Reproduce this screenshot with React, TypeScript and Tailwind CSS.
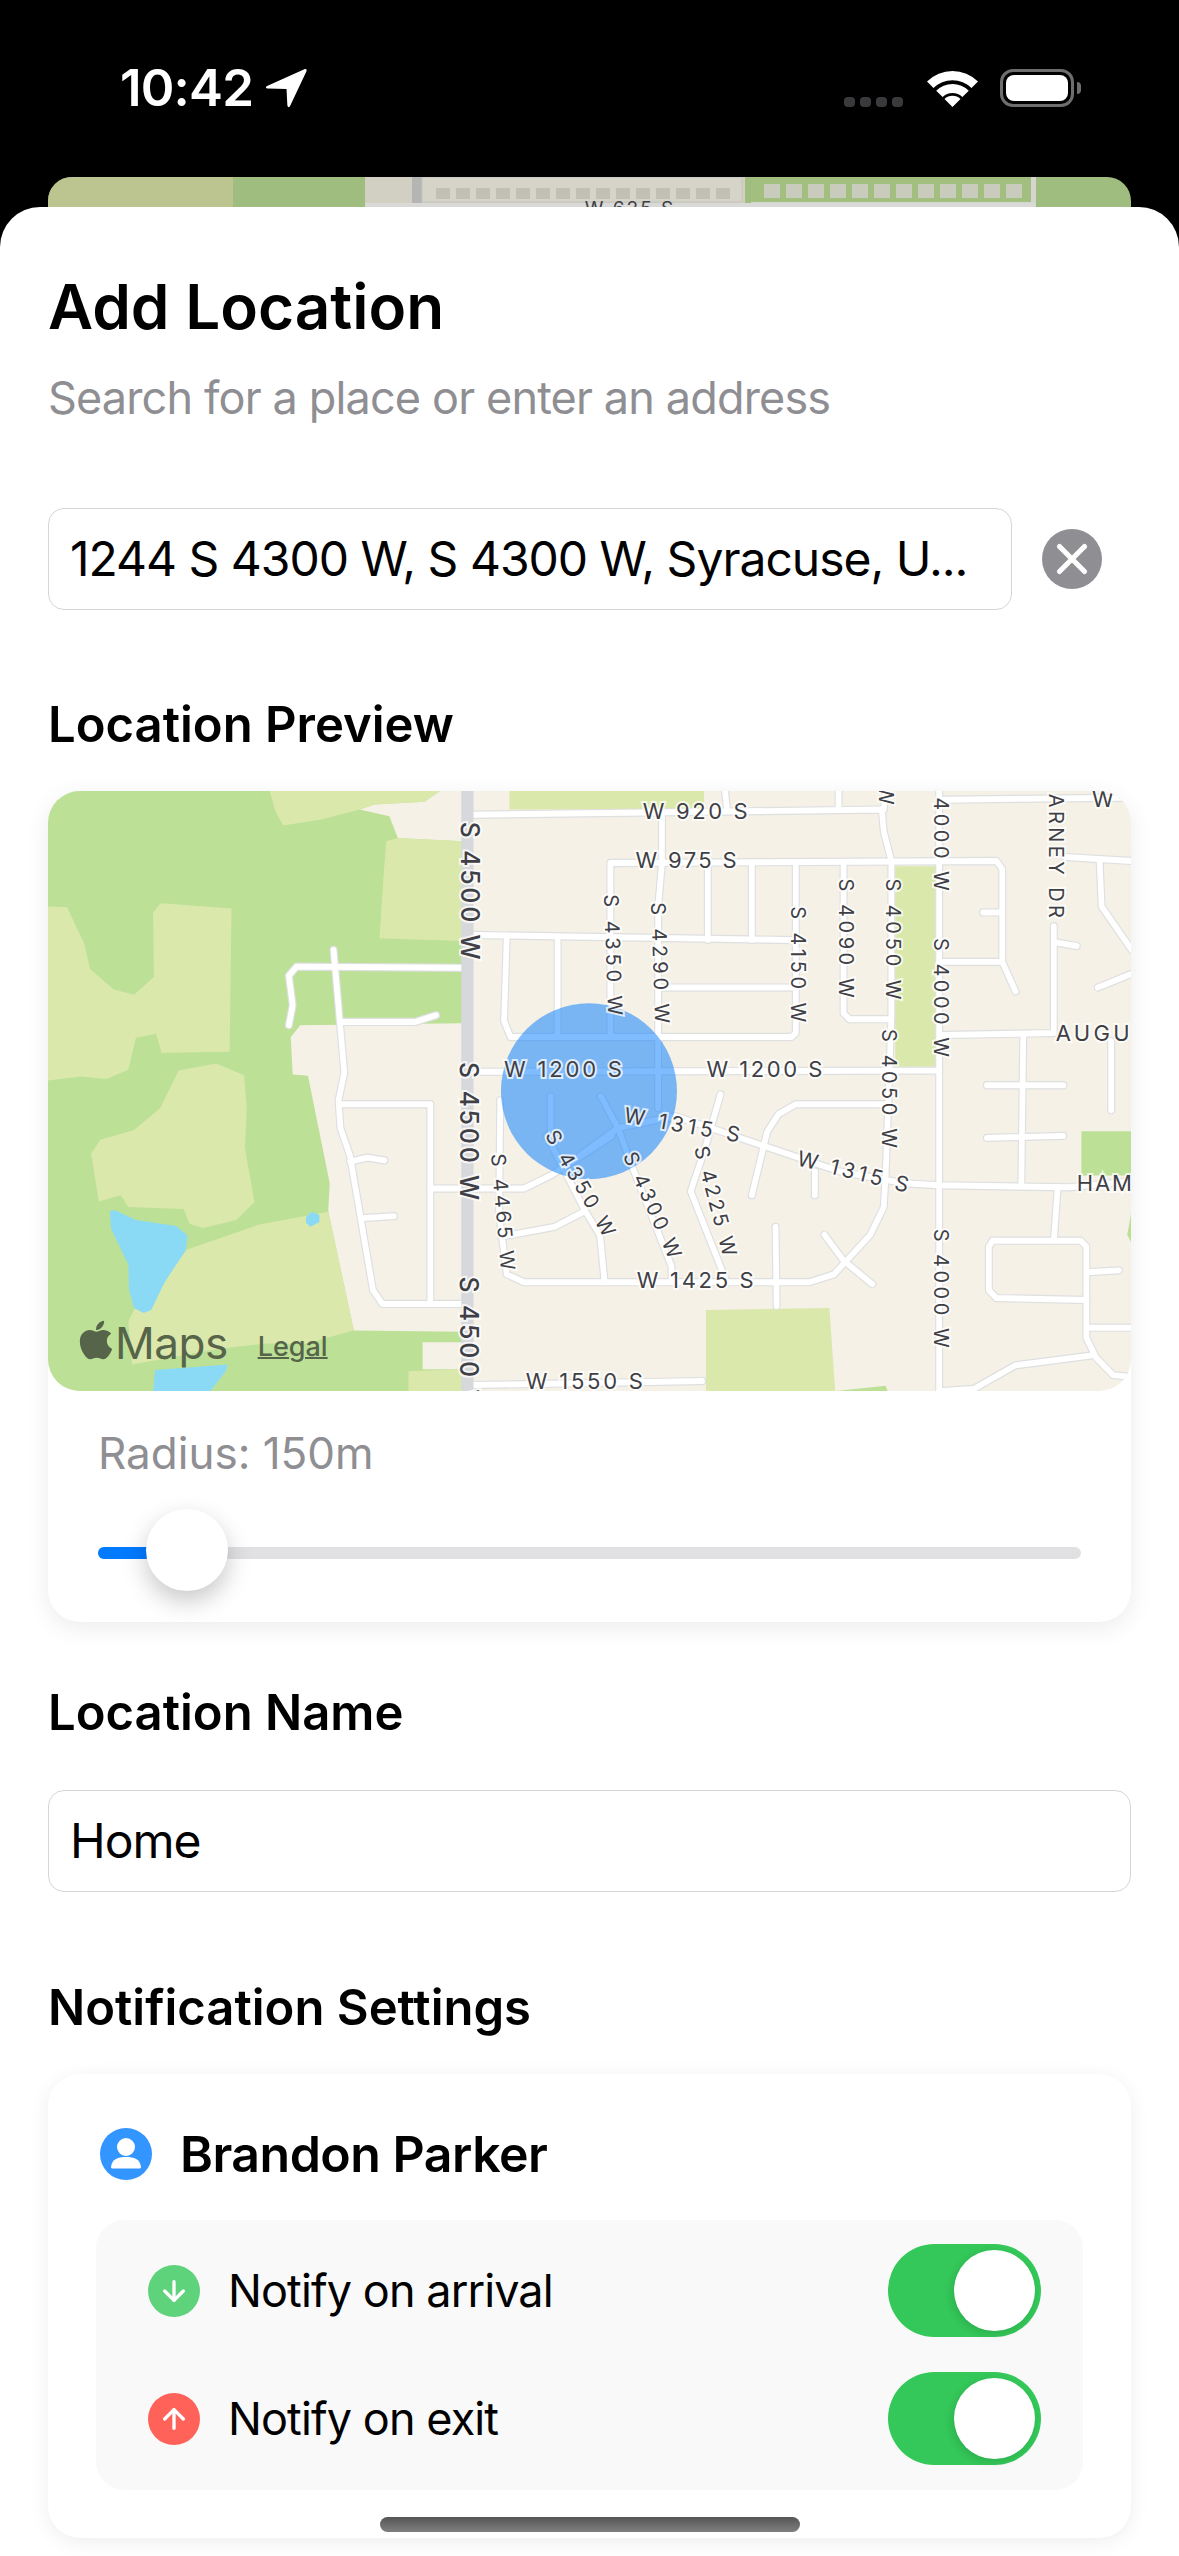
import React from "react";
import { ArrowDown, ArrowUp, X } from "lucide-react";
import { FaApple } from "react-icons/fa";

const sx = (z: number) => (z - 125) * 0.3823;
const sy = (z: number) => (z - 28) * 0.3955;
const R = 1516; // right hand crop starts here in map units

const PARK_DARK = "#bde097";
const PARK_LIGHT = "#dbe8ac";
const LAND = "#f5f1e6";
const WATER = "#8adaf5";

const LIGHT_PATCHES = [
  "705,28 1150,28 1110,55 980,62 940,75 840,100 740,115 720,80",
  "1010,155 1040,147 1208,155 1208,407 992,400 1003,240",
  "125,320 175,322 220,415 235,478 297,530 350,543 402,498 400,335 420,312 605,325 600,687 422,690 408,642 355,652 335,733 278,756 212,750 125,760",
  "467,735 565,717 638,747 645,830 640,930 665,1068 617,1113 530,1133 495,1122 480,1085 335,1080 315,1050 258,1066 238,945 262,910 350,885 418,830",
  "487,1188 675,1125 858,1092 925,1392 800,1425 700,1425 645,1430 560,1440 345,1478 335,1370 350,1340 430,1260",
  "1068,1495 1208,1490 1208,1545 1068,1545",
  `1332,28 ${R + 325},28 ${R + 325},75 1332,75`,
  `${R + 825},218 ${R + 930},218 ${R + 930},725 ${R + 825},725`,
  `${R + 330},1340 ${R + 653},1335 ${R + 668},1545 ${R + 330},1545`,
];

const ROADS = [
  // left estate
  "M1210 475 L775 472 L755 495 L765 570 L755 620",
  "M872 430 L900 740 L885 810 L890 880 L915 950 L975 1290 L1000 1325 L1205 1325",
  "M895 612 L1085 612 L1140 595",
  "M890 820 L1125 820 L1125 1325",
  "M915 965 L960 955 L1005 962",
  "M945 1108 L1030 1103",
  "M1125 1033 L1370 1033 L1440 1000 L1600 900",
  "M1235 738 L2456 735",
  // grid
  "M1235 88 L2306 75 L2311 130 L2331 205 L2331 600 L2316 1000 L2311 1080 L2276 1150 L2181 1250 L2116 1270 L1370 1270 L1325 1250 L1305 1100 L1308 810",
  "M1896 28 L1901 75",
  "M2193 28 L2193 75",
  "M2316 28 L2311 75",
  "M1596 650 L1596 210 L2606 205 L2621 225 L2621 460 L2656 535",
  "M1731 88 L1731 210 L1721 320 L1721 830",
  "M1851 210 L1851 405",
  "M1966 210 L1966 405",
  "M2081 210 L2081 640 L2070 650 L1335 650 L1318 610 L1325 395",
  "M2206 210 L2206 590 L2221 605 L2331 605",
  "M1240 392 L2081 405",
  "M1458 395 L1458 650",
  "M1726 525 L2081 525",
  // east
  "M2456 28 L2456 1545",
  "M2466 645 L2756 640 L2756 370",
  "M2456 460 L2621 460",
  "M2571 335 L2616 335",
  "M2756 410 L2816 420",
  "M2676 645 L2671 1025",
  "M2581 772 L2781 772",
  "M2581 905 L2781 900",
  "M2906 660 L2906 835",
  "M2786 195 L2960 205",
  "M2876 210 L2881 320 L2960 430",
  "M2871 525 L2960 490",
  "M2466 50 L2936 45",
  // W 1315
  "M1616 880 L1766 850 L1996 925 L2196 990 L2366 1020 L2456 1025 L2796 1030 L2960 1015",
  "M2316 820 L2081 820 L2036 845 L2006 890 L1966 1050",
  "M1884 795 L1841 940 L1806 1040 L1900 1270",
  "M2131 990 L2131 1050",
  "M2028 1130 L2031 1330",
  "M2156 1150 L2206 1215 L2281 1275",
  // south east block
  "M2766 1030 L2756 1165",
  "M2596 1165 L2826 1165 L2841 1180 L2841 1410 L2866 1460 L2911 1505 L2960 1510",
  "M2596 1165 L2586 1180 L2586 1290 L2606 1310 L2841 1315",
  "M2841 1245 L2926 1240",
  "M2841 1385 L2960 1385",
  "M2856 1455 L2656 1480 L2546 1540 L2466 1545",
  // around the circle
  "M1440 800 L1440 900",
  "M1571 800 L1616 880 L1656 985 L1756 1230 L1756 1270",
  "M1516 950 L1616 880",
  "M1430 900 L1530 1090 L1568 1150 L1571 1170 L1581 1270",
  "M1310 1155 L1450 1130 L1530 1090",
  "M1235 1530 L1836 1520",
];

type LabelDef = { t: string; x: number; y: number; rot?: number; len?: number; size?: number; start?: boolean; bold?: boolean };

const LABELS: LabelDef[] = [
  { t: "S 4500 W", x: 1228, y: 280, rot: 90, len: 138, size: 25, bold: true },
  { t: "S 4500 W", x: 1226, y: 888, rot: 90, len: 138, size: 25, bold: true },
  { t: "S 4500 W", x: 1226, y: 1430, rot: 90, len: 138, size: 25, bold: true },
  { t: "W 1200 S", x: 1472, y: 730, len: 118, size: 22 },
  { t: "W 1200 S", x: R + 483, y: 730, len: 116, size: 22 },
  { t: "W 920 S", x: R + 302, y: 78, len: 105, size: 22 },
  { t: "W 975 S", x: R + 278, y: 203, len: 101, size: 22 },
  { t: "W 1425 S", x: R + 302, y: 1265, len: 117, size: 22 },
  { t: "W 1550 S", x: 1528, y: 1520, len: 117, size: 22 },
  { t: "AUGU", x: R + 1245, y: 640, len: 74, size: 22, start: true },
  { t: "HAM", x: R + 1300, y: 1018, len: 55, size: 22, start: true },
  { t: "W", x: R + 1368, y: 47, size: 22 },
  { t: "S 4350 W", x: R + 87, y: 442, rot: 88, len: 121, size: 20 },
  { t: "S 4290 W", x: R + 210, y: 462, rot: 88, len: 121, size: 20 },
  { t: "S 4150 W", x: R + 570, y: 466, rot: 90, len: 116, size: 20 },
  { t: "S 4090 W", x: R + 697, y: 400, rot: 90, len: 119, size: 20 },
  { t: "S 4050 W", x: R + 820, y: 402, rot: 90, len: 121, size: 20 },
  { t: "S 4050 W", x: R + 808, y: 780, rot: 90, len: 119, size: 20 },
  { t: "S 4000 W", x: R + 945, y: 550, rot: 90, len: 119, size: 20 },
  { t: "S 4000 W", x: R + 945, y: 130, rot: 90, len: 119, size: 20 },
  { t: "S 4000 W", x: R + 945, y: 1285, rot: 90, len: 119, size: 20 },
  { t: "ARNEY DR", x: R + 1245, y: 192, rot: 90, len: 124, size: 20 },
  { t: "W", x: R + 800, y: 38, rot: 90, size: 20 },
  { t: "W 1315 S", x: R + 268, y: 872, rot: 10, len: 117, size: 21 },
  { t: "W 1315 S", x: R + 715, y: 990, rot: 14, len: 114, size: 21 },
  { t: "S 4300 W", x: R + 190, y: 1075, rot: 66, len: 114, size: 20 },
  { t: "S 4225 W", x: R + 355, y: 1065, rot: 75, len: 113, size: 20 },
  { t: "S 4350 W", x: 1518, y: 1020, rot: 60, len: 119, size: 20 },
  { t: "S 4465 W", x: 1315, y: 1092, rot: 85, len: 117, size: 20 },
];

function MapPreview() {
  return (
    <svg viewBox="0 0 1083 600" className="block w-full h-full" fontFamily="Inter, sans-serif">
      <rect width="1083" height="600" fill={LAND} />
      <g transform="scale(0.3823,0.3955) translate(-125,-28)">
        <polygon points="125,28 1208,28 1208,1545 125,1545" fill={PARK_DARK} />
        <polygon points="1150,28 1208,28 1208,155 1040,147 1018,92 940,75 980,62 1110,55" fill={LAND} />
        <polygon points="760,650 785,620 1208,615 1208,1395 925,1392 858,1090 862,1020 805,748 765,745" fill={LAND} />
        <polygon points="1105,1422 1208,1422 1208,1490 1105,1490" fill={LAND} />
        {LIGHT_PATCHES.map((p, i) => <polygon key={i} points={p} fill={PARK_LIGHT} />)}
        <polygon points={`${R + 670},1545 ${R + 800},1532 ${R + 805},1545`} fill={PARK_DARK} />
        <polygon points={`${R + 1312},888 ${R + 1445},888 ${R + 1445},1000 ${R + 1312},1000`} fill={PARK_DARK} />
        <polygon points={`${R + 1445},1080 ${R + 1432},1150 ${R + 1445},1175`} fill={PARK_DARK} />
        <polygon points="287,1090 300,1088 355,1113 460,1128 490,1152 485,1190 430,1270 395,1340 375,1348 350,1335 337,1290 335,1225 290,1135" fill={WATER} />
        <polygon points="800,1105 815,1092 835,1100 835,1118 812,1130 800,1120" fill={WATER} />
        <polygon points="405,1492 595,1478 590,1495 550,1545 400,1545" fill={WATER} />
        <g fill="none" strokeLinecap="round" strokeLinejoin="round">
          {ROADS.map((d, i) => <path key={i} d={d} stroke="#dedfe0" strokeWidth="21" />)}
          {ROADS.map((d, i) => <path key={i} d={d} stroke="#ffffff" strokeWidth="15" />)}
        </g>
        <rect x="1206" y="28" width="32" height="1517" fill="#d7d8dc" />
      </g>
      <circle cx={sx(1540)} cy={sy(787)} r="88" fill="#007aff" fillOpacity="0.5" />
      {LABELS.map((l, i) => (
        <text
          key={i}
          x={sx(l.x)}
          y={sy(l.y)}
          transform={l.rot ? `rotate(${l.rot} ${sx(l.x)} ${sy(l.y)})` : undefined}
          textAnchor={l.start ? "start" : "middle"}
          dominantBaseline="central"
          fontSize={l.size}
          fontWeight={l.bold ? 500 : 400}
          textLength={l.len}
          lengthAdjust="spacing"
          fill="#3f4045"
          stroke="#ffffff"
          strokeOpacity="0.75"
          strokeWidth="4"
          paintOrder="stroke"
        >
          {l.t}
        </text>
      ))}
    </svg>
  );
}

function BehindStrip() {
  const rowA = [0, 1, 2, 3, 4, 5, 6, 7, 8, 9, 10, 11, 12, 13, 14];
  const rowB = [0, 1, 2, 3, 4, 5, 6, 7, 8, 9, 10, 11];
  return (
    <svg viewBox="0 0 1083 30" className="block w-full h-full" fontFamily="Inter, sans-serif">
      <rect width="1083" height="30" fill="#a0bd80" />
      <rect width="185" height="30" fill="#bcc48f" />
      <rect x="317" width="380" height="30" fill="#d2d0c3" />
      <rect x="364" width="10" height="30" fill="#b5b6b4" />
      <rect x="374" width="320" height="25" fill="#d6d4c8" stroke="#c3c4c0" />
      {rowA.map(i => <rect key={i} x={388 + i * 20} y="11" width="14" height="11" fill="#c2c0b4" />)}
      <rect x="703" width="285" height="30" fill="#d5d5d2" />
      <rect x="703" width="280" height="25" fill="#a2bf80" />
      {rowB.map(i => <rect key={i} x={716 + i * 22} y="7" width="16" height="14" fill="#c9ccbc" />)}
      <rect x="317" y="26" width="670" height="4" fill="#d9d9d7" />
      <text x="582" y="38" textAnchor="middle" fontSize="19" letterSpacing="2" fill="#3f4045">W 625 S</text>
    </svg>
  );
}

function StatusBar() {
  return (
    <div className="h-[177px] flex items-start justify-between pt-[68px] pl-[120px] pr-[98px] text-white">
      <div className="flex items-center gap-[12px]">
        <span className="text-[51px] leading-[40px] font-semibold tracking-[-0.8px] font-['Inter',sans-serif]">10:42</span>
        <svg width="42" height="40" viewBox="0 0 40 38" className="fill-white">
          <path d="M38 1 C39.500 .5 40 1.500 39.500 3 L24 36 C23 38 21.500 37.500 21.300 35.500 L20.500 20 L3 19.500 C.5 19.400 .2 17.800 2.500 16.800 Z" />
        </svg>
      </div>
      <div className="flex items-center h-[40px]">
        <div className="flex gap-[5px] mt-[28px] mr-[24px]">
          <span className="w-[11px] h-[10px] rounded-[4px] bg-[#3a3a3c]" />
          <span className="w-[11px] h-[10px] rounded-[4px] bg-[#3a3a3c]" />
          <span className="w-[11px] h-[10px] rounded-[4px] bg-[#3a3a3c]" />
          <span className="w-[11px] h-[10px] rounded-[4px] bg-[#3a3a3c]" />
        </div>
        <svg width="51" height="38" viewBox="-.5 0 51 38" className="mr-[22px] fill-white">
          <path d="M-.5 12.500 A36 36 0 0 1 50.500 12.500 L44 19 A27 27 0 0 0 6 19 Z" />
          <path d="M8.700 21.700 A23 23 0 0 1 41.300 21.700 L34.900 28.100 A14 14 0 0 0 15.100 28.100 Z" />
          <path d="M17 30 A11.300 11.300 0 0 1 33 30 L25 38 Z" />
        </svg>
        <div className="w-[74px] h-[38px] rounded-[13px] border-[3px] border-[#6e6e70] p-[3px]">
          <div className="w-full h-full rounded-[8px] bg-white" />
        </div>
        <div className="w-[4px] h-[12px] rounded-r-full bg-[#6e6e70] ml-[3px]" />
      </div>
    </div>
  );
}

function SectionTitle({ children, className }: { children: React.ReactNode; className: string }) {
  return <h2 className={`h-[56px] text-[49px] leading-[56px] font-semibold text-black ${className}`}>{children}</h2>;
}

function UserIcon() {
  return (
    <svg width="52" height="52" viewBox="0 0 52 52">
      <circle cx="26" cy="26" r="26" fill="#3395ff" />
      <circle cx="26" cy="19" r="9" fill="#fff" />
      <path d="M11 39 C12 31 18 29 26 29 C34 29 40 31 41 39 C41 40 40 40.500 39 40.500 L13 40.500 C12 40.500 11 40 11 39 Z" fill="#fff" />
    </svg>
  );
}

function Toggle() {
  return (
    <div className="w-[153px] h-[93px] rounded-full bg-[#34c759] flex justify-end items-center pr-[6px]">
      <div className="w-[81px] h-[81px] rounded-full bg-white shadow-[-2px_3px_8px_rgba(0,0,0,0.12)]" />
    </div>
  );
}

function NotifyRow({ label, tint, icon }: { label: string; tint: string; icon: React.ReactNode }) {
  return (
    <div className="flex items-center h-[93px]">
      <div className={`w-[52px] h-[52px] rounded-full flex items-center justify-center text-white ${tint}`}>{icon}</div>
      <span className="ml-[28px] text-[45px] tracking-[-0.9px] text-black flex-1">{label}</span>
      <Toggle />
    </div>
  );
}

export default function App() {
  return (
    <div className="relative w-[1179px] h-[2556px] overflow-hidden bg-black flex flex-col font-['Inter',sans-serif]">
      <StatusBar />
      <div className="h-[30px] mx-[48px] rounded-t-[24px] overflow-hidden">
        <BehindStrip />
      </div>
      <div className="flex-1 bg-white rounded-t-[40px] px-[48px] overflow-hidden">
        <h1 className="mt-[65px] h-[70px] text-[62px] leading-[70px] font-semibold text-black">Add Location</h1>
        <p className="mt-[29px] h-[54px] text-[45px] leading-[54px] tracking-[-0.85px] text-[#8e8e93]">Search for a place or enter an address</p>

        <div className="mt-[83px] flex items-center">
          <div className="w-[964px] h-[102px] rounded-[16px] border-[1.5px] border-[#d6d6da] flex items-center pl-[21px] text-[48px] tracking-[-1px] text-black whitespace-nowrap overflow-hidden">
            1244 S 4300 W, S 4300 W, Syracuse, U...
          </div>
          <div className="ml-[30px] w-[60px] h-[60px] rounded-full bg-[#8e8e93] flex items-center justify-center text-white">
            <X size={50} strokeWidth={2.5} />
          </div>
        </div>

        <SectionTitle className="mt-[87px]">Location Preview</SectionTitle>
        <div className="mt-[38px] h-[831px] rounded-[32px] bg-white shadow-[0_6px_24px_rgba(0,0,0,0.08)]">
          <div className="relative h-[600px] rounded-[32px] overflow-hidden">
            <MapPreview />
            <div className="absolute left-[26px] bottom-[24px] flex items-end text-[#566449]">
              <FaApple size={44} className="mb-[5px]" />
              <span className="ml-[-3px] text-[44px] leading-[48px] font-normal tracking-[-0.5px]">Maps</span>
              <span className="ml-[30px] mb-[5px] text-[27px] leading-[30px] font-medium underline decoration-2">Legal</span>
            </div>
          </div>
          <div className="px-[50px] pt-[36px]">
            <p className="h-[52px] text-[44px] leading-[52px] text-[#8e8e93]">Radius: 150m</p>
            <div className="relative mt-[68px] h-[12px] rounded-full bg-[#e1e1e4]">
              <div className="h-full w-[60px] rounded-l-full bg-[#007aff]" />
              <div className="absolute left-[48px] top-[-38px] w-[82px] h-[82px] rounded-full bg-white shadow-[0_10px_24px_rgba(0,0,0,0.22)]" />
            </div>
          </div>
        </div>

        <SectionTitle className="mt-[63px]">Location Name</SectionTitle>
        <div className="mt-[49px] h-[102px] rounded-[16px] border-[1.5px] border-[#d6d6da] flex items-center pl-[21px] text-[48px] tracking-[-1px] text-black">Home</div>

        <SectionTitle className="mt-[88px]">Notification Settings</SectionTitle>
        <div className="mt-[38px] h-[464px] rounded-[32px] bg-white shadow-[0_4px_20px_rgba(0,0,0,0.07)] px-[48px] pt-[54px]">
          <div className="flex items-center h-[52px] pl-[4px]">
            <UserIcon />
            <span className="ml-[28px] text-[50px] font-semibold text-black tracking-[-0.5px]">Brandon Parker</span>
          </div>
          <div className="mt-[40px] h-[270px] rounded-[28px] bg-[#f9f9f9] pl-[52px] pr-[42px] py-[24px] flex flex-col gap-[35px]">
            <NotifyRow label="Notify on arrival" tint="bg-[#5fd27c]" icon={<ArrowDown size={32} strokeWidth={2.5} />} />
            <NotifyRow label="Notify on exit" tint="bg-[#ff6259]" icon={<ArrowUp size={32} strokeWidth={2.5} />} />
          </div>
        </div>
      </div>
      <div className="absolute left-[380px] top-[2517px] w-[420px] h-[15px] rounded-full bg-gradient-to-b from-[#555555] to-[#808080]" />
    </div>
  );
}
